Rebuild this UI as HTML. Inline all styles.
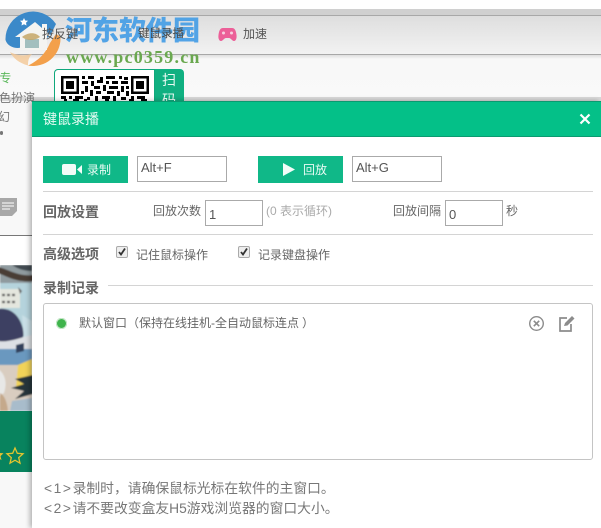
<!DOCTYPE html>
<html lang="zh"><head><meta charset="utf-8"><title>键鼠录播</title>
<style>
html,body{margin:0;padding:0;width:601px;height:528px;overflow:hidden;background:#fff}
body{position:relative;font-family:"Liberation Sans","Noto Sans CJK SC",sans-serif;font-size:12px;color:#666}
.a{position:absolute;white-space:nowrap}
.t{position:absolute;white-space:nowrap;line-height:18px}
.hd{position:absolute;white-space:nowrap;font-size:14px;font-weight:700;color:#666;line-height:20px}
.in{position:absolute;box-sizing:border-box;background:#fff;border:1px solid #aaa;font-size:13px;color:#555;padding-left:3px;white-space:nowrap}
.ln{position:absolute;height:1px;background:#d4d4d4}
.btn{position:absolute;background:#10b888;color:#e8fbf4;top:156px;height:27px;width:85px;font-size:12px;line-height:28px}
.cb{position:absolute;width:12px;height:12px;box-sizing:border-box;border:1px solid #aaa;border-radius:2px;background:#eee}
.n{letter-spacing:1.600px}
</style></head><body>
<!-- browser background -->
<div class="a" style="left:0;top:9px;width:601px;height:6px;background:#d0d0d0"></div>
<div class="a" style="left:0;top:15px;width:601px;height:1px;background:#a8a8a8"></div>
<div class="a" style="left:0;top:16px;width:601px;height:38px;background:linear-gradient(#dedede,#f2f2f2)"></div>
<div class="a" style="left:0;top:54px;width:601px;height:1px;background:#a8a8a8"></div>
<div class="a" style="left:0;top:55px;width:601px;height:43px;background:linear-gradient(#dfdfdf,#f8f8f8 4px,#f9f9f9)"></div>
<div class="a" style="left:0;top:97px;width:601px;height:4px;background:#d9d9d9"></div>
<div class="a" style="left:0;top:101px;width:32px;height:427px;background:#f8f8f8"></div>

<svg class="a" style="left:218px;top:27px" width="19" height="16" viewBox="0 0 19 16"><path d="M5 1h9c3 0 4 3 4.500 7 .4 3-.5 6-2.500 6-2 0-3-3-5-3H8c-2 0-3 3-5 3-2 0-3-3-2.500-6C1 4 2 1 5 1z" fill="#ec5f98"/><circle cx="5.500" cy="6" r="1.500" fill="#f7d0e0"/><circle cx="13.500" cy="6" r="1.500" fill="#f7d0e0"/></svg>

<!-- left side -->
<div class="t" style="left:-4px;top:69px;color:#5cb85c;font-size:12px">&nbsp;专</div>
<div class="t" style="left:-1px;top:89px;color:#777">色扮演</div>
<div class="t" style="left:-2px;top:108px;color:#777">幻</div>
<div class="a" style="left:0;top:131px;width:3px;height:4px;background:#777;border-radius:2px"></div>
<svg class="a" style="left:0;top:198px" width="18" height="19" viewBox="0 0 18 19"><path d="M0 0h17v13l-5 5H0z" fill="#a8a8a8"/><path d="M2 5h12M2 8h12M2 11h8" stroke="#eee" stroke-width="1.200"/></svg>
<div class="a" style="left:0;top:235px;width:32px;height:1px;background:#777"></div>
<div class="a" style="left:0;top:236px;width:32px;height:29px;background:#fff"></div>

<svg class="a" style="left:0;top:265px" width="32" height="146" viewBox="0 0 32 146">
<defs><filter id="b" x="-5%" y="-5%" width="110%" height="110%"><feGaussianBlur stdDeviation=".7"/></filter></defs>
<g filter="url(#b)">
<rect width="32" height="146" fill="#b5d3dc"/>
<rect x="0" y="0" width="32" height="18" fill="#8f9a9e"/>
<path d="M-2 2c10 2 20 10 36 8v6C18 18 8 12-2 8z" fill="#4a3d34"/>
<path d="M12 0h20v6c-8 0-14-2-20-6z" fill="#3f4a50"/>
<path d="M0 24h20v19H0z" fill="#e4e6de"/>
<path d="M2 30h15M2 37h15" stroke="#555" stroke-width="2.200" stroke-dasharray="3 2"/>
<path d="M18 22l4 4-2 3z" fill="#666"/>
<path d="M-2 44c14-2 24 8 26 26l-6 10H-2z" fill="#3c4162"/>
<path d="M22 50l10 6v18l-8 2z" fill="#c9dfe6"/>
<path d="M-2 76c10 2 24-4 34-6v14c-12 0-24 4-34 2z" fill="#dde0e4"/>
<path d="M-2 84h34v16c-10 4-24 4-34 2z" fill="#6b98bf"/>
<path d="M16 80l8-2v8l-8 2z" fill="#33415c"/>
<path d="M-2 100h34v46H-2z" fill="#d9cdc0"/>
<path d="M18 100l14-6v24l-16 4z" fill="#f1d358"/>
<path d="M33 110l-18 4 9 5-13 4 13 3-9 8 18-5z" fill="#28343b"/>
<path d="M-2 104c6 4 10 12 6 24l-6 4z" fill="#e8e8e6"/>
<path d="M0 128c4 2 7 8 8 18H0z" fill="#c5a98b"/>
<path d="M12 136l20-3v13H10z" fill="#a8bccb"/>
</g>
</svg>
<div class="a" style="left:0;top:411px;width:32px;height:61px;background:#08835e"></div>
<svg class="a" style="left:0;top:445px" width="26" height="20" viewBox="0 0 26 20"><path d="M-2 4l1.500 4 4 .3-3 2.800 1 4-3.500-2.200" fill="#e8c030"/><path d="M15 3l2.300 5.300 5.700.5-4.300 3.800 1.300 5.600-5-3-5 3 1.300-5.600L7 8.800l5.700-.5z" fill="none" stroke="#e3c42e" stroke-width="1.300"/></svg>

<!-- QR -->
<div class="a" style="left:54px;top:69px;width:101px;height:32px;box-sizing:border-box;background:#fff;border:1px solid #10a87c;border-bottom:0;border-radius:4px 0 0 0"></div>
<div class="a" style="left:155px;top:69px;width:29px;height:32px;background:#10b081;border-radius:0 4px 0 0"></div>
<div class="t" style="left:162px;top:70px;color:#eafaf4;font-size:14px;line-height:20px;white-space:normal;width:16px">扫<br>码</div>
<svg class="a" style="left:61px;top:76px" width="88" height="25" viewBox="0 0 88 25" shape-rendering="crispEdges">
<path fill="#000" d="M0 0h18v18H0zM70 0h18v18H70z"/>
<path fill="#fff" d="M2.500 2.500h13v13h-13zM72.500 2.500h13v13h-13z"/>
<path fill="#000" d="M5 5h8v8H5zM75 5h8v8h-8z"/>
<path fill="#000" d="M21 0h3v3h-3zM27 0h6v3h-6zM39 1h3v3h-3zM45 0h9v3h-9zM58 0h3v3h-3zM63 1h4v3h-4zM21 5h6v3h-6zM30 5h3v5h-3zM36 4h6v3h-6zM45 5h3v3h-3zM51 5h6v3h-6zM60 5h7v3h-7zM24 10h3v6h-3zM33 10h6v3h-6zM42 9h3v6h-3zM48 10h9v3h-9zM60 10h3v6h-3zM65 10h3v3h-3zM20 15h3v3h-3zM29 14h3v6h-3zM35 15h5v3h-5zM46 15h7v3h-7zM56 15h3v5h-3zM65 15h3v5h-3zM0 20h5v3H0zM8 20h3v3H8zM14 20h8v3h-8zM26 21h3v3h-3zM34 20h3v5h-3zM41 20h8v3h-8zM52 20h3v5h-3zM60 21h5v3h-5zM70 20h3v3h-3zM76 20h8v3h-8zM3 23h3v2H3zM12 23h6v2h-6zM23 23h3v2h-3zM44 23h4v2h-4zM68 23h5v2h-5zM80 23h6v2h-6z"/>
</svg>

<!-- dialog -->
<div class="a" style="left:32px;top:101px;width:569px;height:427px;background:#fff;box-shadow:-2px 0 5px rgba(0,0,0,.3)"></div>
<div class="a" style="left:32px;top:101px;width:569px;height:36px;box-sizing:border-box;background:#04c088;border-top:1px solid #0a9a70;border-bottom:1px solid #0a9a70"></div>
<div class="t" style="left:43px;top:110px;color:#e6fbf3;font-size:14px">键鼠录播</div>
<svg class="a" style="left:579px;top:113px" width="12" height="12" viewBox="0 0 12 12"><path d="M1.500 1.500l9 9M10.500 1.500l-9 9" stroke="#fff" stroke-width="2.200"/></svg>

<!-- row 1 -->
<div class="btn" style="left:43px"><svg class="a" style="left:19px;top:8px" width="20" height="11" viewBox="0 0 20 11"><rect width="14" height="11" rx="2" fill="#f2fcf8"/><path d="M15 5.500L20 1v9z" fill="#f2fcf8"/></svg><span class="a" style="left:44px;top:0">录制</span></div>
<div class="in" style="left:137px;top:156px;width:90px;height:26px;line-height:22px">Alt+F</div>
<div class="btn" style="left:258px"><svg class="a" style="left:25px;top:7px" width="12" height="13" viewBox="0 0 12 13"><path d="M0 0l12 6.500L0 13z" fill="#f2fcf8"/></svg><span class="a" style="left:45px;top:0">回放</span></div>
<div class="in" style="left:352px;top:156px;width:90px;height:26px;line-height:22px">Alt+G</div>
<div class="ln" style="left:43px;top:191px;width:550px"></div>

<!-- row 2 -->
<div class="hd" style="left:43px;top:202px">回放设置</div>
<div class="t" style="left:153px;top:202px">回放次数</div>
<div class="in" style="left:205px;top:200px;width:58px;height:26px;line-height:28px">1</div>
<div class="t" style="left:266px;top:202px;color:#aaa">(0 表示循环)</div>
<div class="t" style="left:393px;top:202px">回放间隔</div>
<div class="in" style="left:445px;top:200px;width:58px;height:26px;line-height:28px">0</div>
<div class="t" style="left:506px;top:202px">秒</div>
<div class="ln" style="left:43px;top:234px;width:550px"></div>

<!-- row 3 -->
<div class="hd" style="left:43px;top:244px">高级选项</div>
<div class="cb" style="left:116px;top:246px"></div>
<svg class="a" style="left:117px;top:247px" width="10" height="10" viewBox="0 0 10 10"><path d="M2 5l2 2.500L8 1.500" fill="none" stroke="#333" stroke-width="1.800"/></svg>
<div class="t" style="left:136px;top:246px">记住鼠标操作</div>
<div class="cb" style="left:238px;top:246px"></div>
<svg class="a" style="left:239px;top:247px" width="10" height="10" viewBox="0 0 10 10"><path d="M2 5l2 2.500L8 1.500" fill="none" stroke="#333" stroke-width="1.800"/></svg>
<div class="t" style="left:258px;top:246px">记录键盘操作</div>

<!-- row 4 -->
<div class="hd" style="left:43px;top:278px">录制记录</div>
<div class="ln" style="left:108px;top:285px;width:485px"></div>
<div class="a" style="left:43px;top:303px;width:550px;height:157px;box-sizing:border-box;border:1px solid #c4c4c4;border-radius:3px;background:#fff"></div>
<div class="a" style="left:56px;top:318px;width:11px;height:11px;border-radius:50%;background:#3fb44c;box-shadow:0 0 0 1px #c9e8cc inset"></div>
<div class="t" style="left:79px;top:314px">默认窗口（保持在线挂机-全自动鼠标连点<span style="margin-left:3px">）</span></div>
<svg class="a" style="left:528px;top:315px" width="17" height="17" viewBox="0 0 17 17"><circle cx="8.500" cy="8.500" r="6.800" fill="none" stroke="#8c8c8c" stroke-width="1.400"/><path d="M5.800 5.800l5.400 5.400M11.200 5.800l-5.400 5.400" stroke="#8c8c8c" stroke-width="1.600"/></svg>
<svg class="a" style="left:558px;top:315px" width="17" height="17" viewBox="0 0 17 17"><path d="M9 3H2v13h11V9" fill="none" stroke="#8c8c8c" stroke-width="1.700"/><path d="M6 11l1-3 7-7 2.500 2.500-7 7z" fill="#8c8c8c"/></svg>

<!-- notes -->
<div class="t" style="left:44px;top:479px;font-size:13.800px;line-height:20px;color:#777"><span class="n">&lt;1&gt;</span>录制时，请确保鼠标光标在软件的主窗口。</div>
<div class="t" style="left:44px;top:499px;font-size:13.800px;line-height:20px;color:#777"><span class="n">&lt;2&gt;</span>请不要改变盒友H5游戏浏览器的窗口大小。</div>

<!-- watermark -->
<svg class="a" style="left:4px;top:10px" width="60" height="58" viewBox="0 0 60 58">
<path d="M1.500 30A27.500 27.500 0 0 1 52 14L46 26 30 36 14 38C8 38 3 35 1.500 30z" fill="#3b89c9"/>
<path d="M56.500 28A27.500 27.500 0 0 1 24 55.500C36 50 42 42 46 33L52 24c2 1 4 2 4.500 4z" fill="#f3a04b"/>
<path d="M6 42C14 46 20 46 28 44 24 48 24 52 24 55.500 15 53 9 48 6 42z" fill="#f3c795" opacity=".8"/>
<path d="M11 27L31 12l7 6v-4h5v8l4 4h-4v14H16V27z" fill="#f4f4f1"/>
<path d="M21 29h14v9H21z" fill="#7fa8a8" opacity=".7"/>
<path d="M18 27c6-5 14-5 18 0-6 4-13 4-18 0z" fill="#c4a666" opacity=".85"/>
<path d="M20 8l1.200 2.500 2.800.3-2 2 .5 2.700-2.500-1.300-2.500 1.300.5-2.700-2-2 2.800-.3z" fill="#fff"/>
</svg>
<div class="a" style="left:65px;top:10px;font-family:'Noto Sans CJK SC',sans-serif;font-weight:900;font-size:27px;line-height:38px;color:#4aa0e6;opacity:.95">河东软件园</div>
<div class="a" style="left:66px;top:46px;font-family:'Liberation Serif',serif;font-weight:700;font-size:18px;line-height:22px;letter-spacing:1.200px;color:#6aa84f">www.pc0359.cn</div>

<!-- toolbar labels sit over the translucent watermark -->
<div class="t" style="left:42px;top:25px;color:#555;font-size:12px">按反键</div>
<div class="t" style="left:138px;top:25px;color:#444;font-size:11.500px">键鼠录播</div>
<div class="t" style="left:243px;top:25px;color:#555">加速</div>
</body></html>
